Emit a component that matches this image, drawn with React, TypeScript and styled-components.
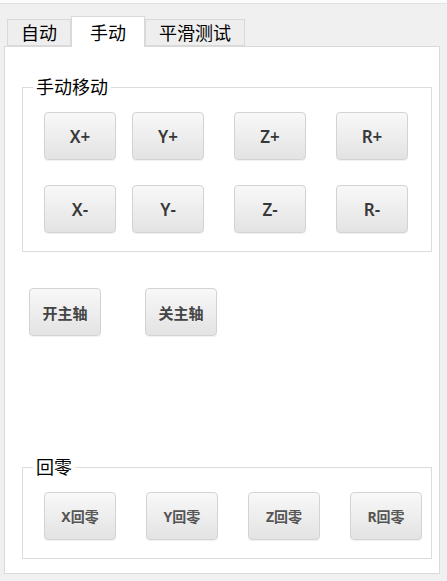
import React from 'react';
import styled, { createGlobalStyle } from 'styled-components';

const GlobalStyle = createGlobalStyle`
  html, body {
    margin: 0;
    padding: 0;
    background: #f0f0f0;
  }
  body {
    font-family: "Noto Sans", "Noto Sans CJK SC", sans-serif;
    color: #000;
  }
`;

const axisPlus = ['X+', 'Y+', 'Z+', 'R+'];
const axisMinus = ['X-', 'Y-', 'Z-', 'R-'];
const homeButtons = ['X回零', 'Y回零', 'Z回零', 'R回零'];

export default function App() {
  return (
    <StWindow>
      <GlobalStyle />
      <StTopStrip />
      <StTabBar>
        <StTab>自动</StTab>
        <StTab $active>手动</StTab>
        <StTab>平滑测试</StTab>
      </StTabBar>
      <StPane>
        <StGroup>
          <StLegend>手动移动</StLegend>
          <StJogGrid>
            {axisPlus.map((a) => (
              <StButton key={a} $fs={17} $weight={600}>{a}</StButton>
            ))}
            {axisMinus.map((a) => (
              <StButton key={a} $fs={17} $weight={600}>{a}</StButton>
            ))}
          </StJogGrid>
        </StGroup>

        <StSpindleRow>
          <StButton $fs={15} $tone="#444">开主轴</StButton>
          <StButton $fs={15} $tone="#444">关主轴</StButton>
        </StSpindleRow>

        <StGroup $bottom>
          <StLegend>回零</StLegend>
          <StHomeRow>
            {homeButtons.map((h) => (
              <StButton key={h} $fs={14} $tone="#555">{h}</StButton>
            ))}
          </StHomeRow>
        </StGroup>
      </StPane>
    </StWindow>
  );
}

const StWindow = styled.div`
  width: 447px;
  height: 581px;
  display: flex;
  flex-direction: column;
  overflow: hidden;
`;

const StTopStrip = styled.div`
  height: 3px;
  background: #fbfbfb;
  border-bottom: 1px solid #e2e2e2;
`;

const StTabBar = styled.div`
  display: flex;
  align-items: flex-end;
  height: 30px;
  margin-top: 12px;
  padding-left: 7px;
`;

const StTab = styled.div<{ $active?: boolean }>`
  box-sizing: border-box;
  height: ${(p) => (p.$active ? '31px' : '27px')};
  margin-bottom: ${(p) => (p.$active ? '-1px' : '0')};
  padding: ${(p) => (p.$active ? '2px 18px 0' : '1px 13px 0')};
  display: flex;
  align-items: center;
  justify-content: center;
  font-size: 18px;
  line-height: 1;
  background: ${(p) => (p.$active ? '#ffffff' : '#eeeeee')};
  border: 1px solid #d9d9d9;
  border-bottom: ${(p) => (p.$active ? 'none' : '1px solid #d9d9d9')};
  position: relative;
  z-index: ${(p) => (p.$active ? 1 : 0)};
`;

const StPane = styled.div`
  box-sizing: border-box;
  width: 436px;
  height: 528px;
  margin-left: 4px;
  background: #ffffff;
  border: 1px solid #dadada;
  display: flex;
  flex-direction: column;
  padding: 30px 7px 14px 17px;
`;

const StGroup = styled.fieldset<{ $bottom?: boolean }>`
  margin: ${(p) => (p.$bottom ? 'auto 0 0 0' : '0')};
  padding: 15px 0 18px 0;
  border: 1px solid #dcdcdc;
  min-width: 0;
`;

const StLegend = styled.legend`
  margin-left: 10px;
  padding: 0 3px;
  font-size: 18px;
  line-height: 20px;
`;

const StJogGrid = styled.div`
  display: grid;
  grid-template-columns: 88px 102px 102px 72px;
  row-gap: 25px;
  padding-left: 21px;
`;

const StSpindleRow = styled.div`
  display: flex;
  gap: 44px;
  margin-top: 36px;
  padding-left: 7px;
`;

const StHomeRow = styled.div`
  display: flex;
  gap: 30px;
  padding-left: 21px;
`;

const StButton = styled.button<{ $fs: number; $tone?: string; $weight?: number }>`
  box-sizing: border-box;
  width: 72px;
  height: 48px;
  padding: 0;
  border: 1px solid #d3d3d3;
  border-radius: 4px;
  background: linear-gradient(#f8f8f8, #e3e3e3);
  box-shadow: 0 1px 1px rgba(0, 0, 0, 0.06);
  font-family: "Noto Sans", "Noto Sans CJK SC", sans-serif;
  font-size: ${(p) => p.$fs}px;
  font-weight: ${(p) => p.$weight ?? 700};
  color: ${(p) => p.$tone ?? '#383838'};
  display: flex;
  align-items: center;
  justify-content: center;
`;
